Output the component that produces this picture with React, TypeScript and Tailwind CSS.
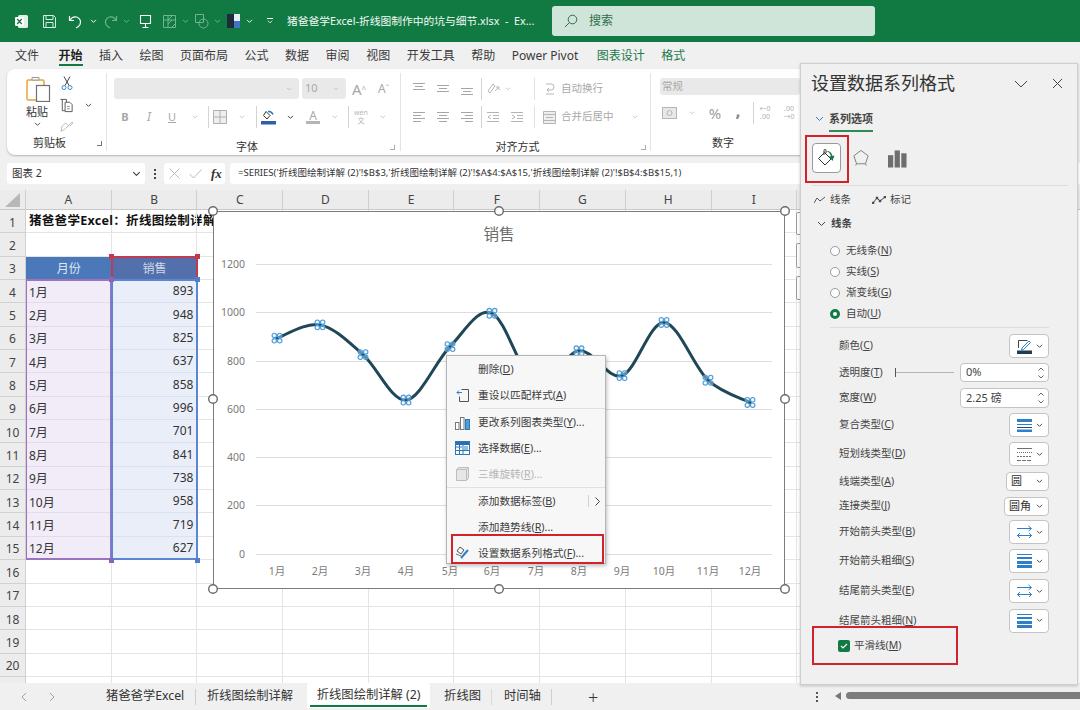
import React from "react";

const months = ["1月","2月","3月","4月","5月","6月","7月","8月","9月","10月","11月","12月"];
const sales = [893,948,825,637,858,996,701,841,738,958,719,627];
const xs = [277,320,363,406,450,492,536,579,622,664,708,750];
const ys = sales.map((v) => 554 - v * 0.2417);
const pts = xs.map((x, i) => [x, ys[i]] as [number, number]);

function smoothPath() {
  let d = `M${pts[0][0]} ${pts[0][1]}`;
  for (let i = 0; i < pts.length - 1; i++) {
    const p0 = pts[Math.max(i - 1, 0)], p1 = pts[i], p2 = pts[i + 1], p3 = pts[Math.min(i + 2, pts.length - 1)];
    const c1x = p1[0] + (p2[0] - p0[0]) / 6, c1y = p1[1] + (p2[1] - p0[1]) / 6;
    const c2x = p2[0] - (p3[0] - p1[0]) / 6, c2y = p2[1] - (p3[1] - p1[1]) / 6;
    d += ` C${c1x} ${c1y} ${c2x} ${c2y} ${p2[0]} ${p2[1]}`;
  }
  return d;
}

function Acc({ t }: { t: string }) {
  const m = t.match(/^(.*\()(.)(\).*)$/);
  if (!m) return <>{t}</>;
  return <>{m[1]}<span className="underline">{m[2]}</span>{m[3]}</>;
}

function Chev({ c = "#555", w = 8 }: { c?: string; w?: number }) {
  return (
    <svg width={w} height={w * 0.6} viewBox="0 0 8 5" fill="none" stroke={c} strokeWidth="1.1">
      <path d="M1 1l3 3 3-3" />
    </svg>
  );
}

function Cell({ w, children }: { w: string; children?: React.ReactNode }) {
  return <div className={`flex items-center justify-center shrink-0 ${w}`}>{children}</div>;
}

function Sep() {
  return <div className="w-px h-[22px] bg-[#d4d4d4] shrink-0" />;
}

function AlignV({ y }: { y: number }) {
  return (
    <svg width="14" height="14" viewBox="0 0 14 14" stroke="#a6a6a6" strokeWidth="1">
      <path d={`M1 ${y + .5}h12M3 ${y + 3.5}h8M1 ${y + 6.5}h12`} />
    </svg>
  );
}
function AlignH({ k }: { k: "l" | "c" | "r" }) {
  const d = k === "l" ? "M1 2.5h12M1 5.5h8M1 8.5h12M1 11.5h8" : k === "c" ? "M1 2.5h12M3 5.5h8M1 8.5h12M3 11.5h8" : "M1 2.5h12M5 5.5h8M1 8.5h12M5 11.5h8";
  return <svg width="14" height="14" viewBox="0 0 14 14" stroke="#a6a6a6" strokeWidth="1"><path d={d} /></svg>;
}

function TitleBar() {
  return (
    <div className="h-[42px] bg-[#117a43] flex items-center text-white shrink-0">
      <div className="flex items-center pl-[14px] w-[287px] shrink-0">
        <svg className="shrink-0" width="15" height="15" viewBox="0 0 15 15"><rect x="4" y="1" width="10" height="13" rx="1.5" fill="#dff0e6" /><rect x="1" y="3" width="9" height="9" rx="1" fill="#fff" /><path d="M3.2 5l4.5 5M7.7 5l-4.5 5" stroke="#117a43" strokeWidth="1.3" /></svg>
        <svg className="ml-[13px] shrink-0" width="15" height="15" viewBox="0 0 15 15" fill="none" stroke="#d5efe0" strokeWidth="1"><path d="M1.5 1.5h10l2 2v10h-12z" /><path d="M4 1.5v4h7v-4M4 13.5v-5h7v5" /></svg>
        <svg className="ml-[11px] shrink-0" width="15" height="15" viewBox="0 0 15 15" fill="none" stroke="#fff" strokeWidth="1.2"><path d="M1.5 2v4.5H6M2 6.5C3.5 3.5 6 2.5 8.5 3c3.5.8 5 4.5 3.5 7.5-1 1.8-2.5 3-4 3.5" /></svg>
        <div className="ml-[7px]"><Chev c="#fff" w={7} /></div>
        <svg className="ml-[6px] shrink-0" width="15" height="15" viewBox="0 0 15 15" fill="none" stroke="#6fb591" strokeWidth="1.2"><path d="M13.5 2v4.5H9M13 6.5C11.5 3.5 9 2.5 6.5 3c-3.5.8-5 4.5-3.5 7.5 1 1.8 2.5 3 4 3.5" /></svg>
        <div className="ml-[5px]"><Chev c="#6fb591" w={7} /></div>
        <svg className="ml-[8px] shrink-0" width="15" height="15" viewBox="0 0 15 15" fill="none" stroke="#fff" strokeWidth="1.1"><path d="M2.5 1.5h10v8h-10zM7.5 9.5v4M4.5 13.5h6" /></svg>
        <svg className="ml-[9px] shrink-0" width="15" height="15" viewBox="0 0 15 15" fill="none" stroke="#6fb591" strokeWidth="1"><path d="M1.5 1.5h12v12h-12zM1.5 6h12M6 1.5v12M9.5 13.5l4-4M6 10l4-4M6 6l4-4" /></svg>
        <div className="ml-[5px]"><Chev c="#6fb591" w={7} /></div>
        <svg className="ml-[5px] shrink-0" width="16" height="16" viewBox="0 0 16 16" fill="none" stroke="#6fb591" strokeWidth="1"><path d="M1.5 1.5h8v8h-8z" /><circle cx="9.5" cy="10.5" r="4.5" /></svg>
        <div className="ml-[4px]"><Chev c="#6fb591" w={7} /></div>
        <div className="ml-[6px] w-[13px] h-[14px] grid grid-cols-2 grid-rows-2 shrink-0">
          <div className="bg-[#1d2b3d]" /><div className="bg-[#e8eef6]" /><div className="bg-[#1d2b3d]" /><div className="bg-[#4472c4]" />
        </div>
        <div className="ml-[6px]"><Chev c="#fff" w={7} /></div>
        <div className="ml-[14px] flex flex-col items-center gap-[1px]"><div className="w-[6px] h-px bg-white" /><Chev c="#fff" w={6} /></div>
      </div>
      <div className="w-[265px] shrink-0 text-[10.75px] whitespace-nowrap text-[#f3faf6]">猪爸爸学Excel-折线图制作中的坑与细节.xlsx&nbsp; -&nbsp; Ex...</div>
      <div className="w-[323px] h-[30px] bg-[#cfe5d9] rounded-[3px] flex items-center pl-[12px] shrink-0">
        <svg width="14" height="14" viewBox="0 0 14 14" fill="none" stroke="#2f6e4c" strokeWidth="1"><circle cx="8.5" cy="5.5" r="4.3" /><path d="M5.3 8.7L1 13" /></svg>
        <span className="ml-[11px] text-[12px] text-[#2f6e4c]">搜索</span>
      </div>
    </div>
  );
}

function MenuBar() {
  const items = ["文件","开始","插入","绘图","页面布局","公式","数据","审阅","视图","开发工具","帮助","Power Pivot"];
  return (
    <div className="h-[27px] bg-[#f0f0f0] flex items-start pl-[15px] gap-[16.5px] text-[12px] text-[#3a3a3a] shrink-0 pt-[5px]">
      {items.map((t) => (
        t === "开始" ? (
          <div key={t} className="relative font-bold text-[#222] ml-[3px]">{t}<div className="absolute left-0 right-0 top-[17px] h-[2px] bg-[#117a43]" /></div>
        ) : <div key={t}>{t}</div>
      ))}
      <div className="text-[#1c7a4a] ml-[2px]">图表设计</div>
      <div className="text-[#1c7a4a]">格式</div>
    </div>
  );
}

function Ribbon() {
  const dim = "text-[#a8a8a8]";
  return (
    <div className="h-[94px] bg-[#f0f0f0] pl-[7px] shrink-0">
      <div className="h-[86px] w-[1060px] bg-white rounded-[8px] shadow-[0_1px_2px_rgba(0,0,0,0.25)] flex text-[11px] text-[#333] overflow-hidden">
        {/* clipboard */}
        <div className="w-[100px] border-r border-[#e3e3e3] flex flex-col my-[4px] shrink-0">
          <div className="flex h-[66px]">
            <div className="w-[52px] pl-[19px] flex flex-col items-start shrink-0">
              <svg className="mt-[3px] shrink-0" width="25" height="26" viewBox="0 0 25 26" fill="none"><rect x="1" y="4" width="17" height="20" rx="1.5" stroke="#e8a33d" strokeWidth="1.5" fill="#fff" /><path d="M6 4h7V1.5H6z" stroke="#999" fill="#fff" /><rect x="10.500" y="9.500" width="13" height="16" fill="#fff" stroke="#707070" strokeWidth="1.2" /></svg>
              <div className="text-[11px] mt-[3px] leading-[14px]">粘贴</div>
              <div className="ml-[8px] mt-[3px]"><Chev c="#444" w={7} /></div>
            </div>
            <div className="flex flex-col items-start pt-[3px]">
              <svg className="ml-[2px]" width="12" height="14" viewBox="0 0 12 14" fill="none"><path d="M3 .5l5 9M9 .5l-5 9" stroke="#444" strokeWidth="1" /><circle cx="3" cy="11.500" r="2" stroke="#3b89c9" /><circle cx="9" cy="11.500" r="2" stroke="#3b89c9" /></svg>
              <div className="flex items-center gap-[11px] mt-[8px]">
                <svg width="15" height="15" viewBox="0 0 16 16" fill="none" stroke="#555"><path d="M3 1.500h5v3M1.500 1.500h2v12h3" /><path d="M6.500 4.500h5l2.500 2.500v7.500h-7.500z" /><path d="M8.500 9h3M8.500 11.500h3" stroke="#888" /></svg>
                <Chev c="#444" w={7} />
              </div>
              <svg className="mt-[8px] ml-[1px]" width="14" height="13" viewBox="0 0 15 14" fill="none" stroke="#b5b5b5"><path d="M1 11l4-2 4-4-3-3-4 4zM9 5l4-4 1 1-4 4" /></svg>
            </div>
          </div>
          <div className="relative text-center pr-[14px] leading-[16px]">剪贴板<span className="absolute right-[4px] top-[6px] w-[5px] h-[5px] border-b border-r border-[#777]" /></div>
        </div>
        {/* font */}
        <div className="w-[294px] border-r border-[#e3e3e3] flex flex-col my-[4px] pl-[7px] shrink-0">
          <div className="flex items-center mt-[5px] h-[21px]">
            <div className="w-[185px] h-[21px] bg-[#e9e9e9] rounded-[3px] flex items-center justify-end pr-[7px] shrink-0"><Chev c="#bbb" w={6} /></div>
            <div className={`ml-[3px] w-[44px] h-[21px] bg-[#e9e9e9] rounded-[3px] flex items-center justify-between pl-[3px] pr-[7px] text-[11px] shrink-0 ${dim}`}>10<Chev c="#bbb" w={6} /></div>
            <div className={`ml-[6px] text-[15px] leading-[18px] ${dim} w-[26px] shrink-0`}>A<span className="text-[8px] align-top">^</span></div>
            <div className={`text-[12px] leading-[18px] ${dim}`}>A<span className="text-[8px] align-top">ˇ</span></div>
          </div>
          <div className="flex items-center mt-[8px] h-[20px]">
            <Cell w="w-[22px]"><span className={`font-bold text-[11px] ${dim}`}>B</span></Cell>
            <Cell w="w-[26px]"><span className={`italic text-[12px] ${dim}`}>I</span></Cell>
            <Cell w="w-[20px]"><span className={`underline text-[11px] ${dim}`}>U</span></Cell>
            <Cell w="w-[26px]"><Chev c="#bbb" w={6} /></Cell>
            <Cell w="w-[1px]"><Sep /></Cell>
            <Cell w="w-[22px]"><svg width="14" height="14" viewBox="0 0 14 14" fill="#efefef" stroke="#b0b0b0"><path d="M.5.5h13v13H.5zM7 .5v13M.5 7h13" /></svg></Cell>
            <Cell w="w-[22px]"><Chev c="#bbb" w={6} /></Cell>
            <Cell w="w-[6px]"><Sep /></Cell>
            <Cell w="w-[18px]"><svg width="15" height="15" viewBox="0 0 15 15"><path d="M5 1.500l4 4-3 3.500-3.500-3.500z" fill="#fff" stroke="#333" /><path d="M7 1.500c2.500-.5 4 .5 5 3" stroke="#2f75b5" strokeWidth="1.500" fill="none" /><rect x="0" y="11" width="15" height="3.500" fill="#2f5fa8" /></svg></Cell>
            <Cell w="w-[26px]"><Chev c="#333" w={7} /></Cell>
            <Cell w="w-[20px]"><div className="flex flex-col items-center"><span className={`text-[12px] leading-[11px] ${dim}`}>A</span><div className="w-[14px] h-[3px] bg-[#b5b5b5]" /></div></Cell>
            <Cell w="w-[24px]"><Chev c="#bbb" w={6} /></Cell>
            <Cell w="w-[2px]"><Sep /></Cell>
            <Cell w="w-[24px]"><div className="flex flex-col items-center text-[7px] leading-[8px] text-[#b8b8b8]"><span>wén</span><span>文</span></div></Cell>
            <Cell w="w-[20px]"><Chev c="#bbb" w={6} /></Cell>
          </div>
          <div className="relative text-center mt-[12px] pr-[20px] leading-[16px]">字体<span className="absolute right-[5px] top-[6px] w-[5px] h-[5px] border-b border-r border-[#aaa]" /></div>
        </div>
        {/* alignment */}
        <div className="w-[250px] border-r border-[#e3e3e3] flex flex-col my-[4px] shrink-0 pl-[6px]">
          <div className="flex items-center mt-[5px] h-[21px]">
            <Cell w="w-[24px]"><AlignV y={1} /></Cell>
            <Cell w="w-[24px]"><AlignV y={3} /></Cell>
            <Cell w="w-[24px]"><AlignV y={6} /></Cell>
            <Cell w="w-[4px]"><Sep /></Cell>
            <Cell w="w-[20px]"><svg width="15" height="14" viewBox="0 0 15 14" fill="none" stroke="#b5b5b5"><path d="M2 9l5-7 2 2-5 7zM9 9l4-4M13 5h-3M13 5v3" /></svg></Cell>
            <Cell w="w-[10px]"><Chev c="#bbb" w={6} /></Cell>
            <div className="w-[22px] flex justify-end shrink-0"><div className="w-px h-[22px] bg-[#e3e3e3]" /></div>
            <div className={`ml-[9px] flex items-center gap-[5px] ${dim} text-[10.5px] whitespace-nowrap`}>
              <svg width="12" height="14" viewBox="0 0 12 14" fill="none" stroke="#b5b5b5"><path d="M2 2h5a3 3 0 010 6H3M5 6L3 8l2 2M2 12h8" /></svg>
              自动换行
            </div>
          </div>
          <div className="flex items-center mt-[8px] h-[20px]">
            <Cell w="w-[24px]"><AlignH k="l" /></Cell>
            <Cell w="w-[24px]"><AlignH k="c" /></Cell>
            <Cell w="w-[24px]"><AlignH k="r" /></Cell>
            <Cell w="w-[4px]"><Sep /></Cell>
            <Cell w="w-[20px]"><svg width="14" height="14" viewBox="0 0 14 14" fill="none" stroke="#b5b5b5"><path d="M1 2.500h12M7 5.500h6M7 8.500h6M1 11.500h12M5 5l-3 2 3 2" /></svg></Cell>
            <Cell w="w-[28px]"><svg width="14" height="14" viewBox="0 0 14 14" fill="none" stroke="#b5b5b5"><path d="M1 2.500h12M7 5.500h6M7 8.500h6M1 11.500h12M2 5l3 2-3 2" /></svg></Cell>
            <div className="w-[4px] flex justify-end shrink-0"><div className="w-px h-[22px] bg-[#e3e3e3]" /></div>
            <div className={`ml-[8px] flex items-center gap-[5px] ${dim} text-[10.5px] whitespace-nowrap`}>
              <svg width="13" height="13" viewBox="0 0 13 13" fill="#eee" stroke="#b5b5b5"><path d="M.5.500h12v12H.5zM.5 3.500h12M.5 9.500h12M3 6.500h7" /></svg>
              合并后居中
            </div>
            <div className="ml-[18px]"><Chev c="#bbb" w={6} /></div>
          </div>
          <div className="relative text-center mt-[12px] pr-[22px] leading-[16px]">对齐方式<span className="absolute right-[4px] top-[6px] w-[5px] h-[5px] border-b border-r border-[#aaa]" /></div>
        </div>
        {/* number */}
        <div className="w-[150px] flex flex-col my-[4px] pl-[9px] shrink-0">
          <div className={`mt-[5px] w-[140px] h-[21px] bg-[#e9e9e9] rounded-[3px] flex items-center pl-[2px] text-[10.5px] ${dim}`}>常规</div>
          <div className="flex items-center mt-[8px] h-[20px]">
            <Cell w="w-[18px]"><svg width="15" height="12" viewBox="0 0 15 12" fill="#e8e8e8" stroke="#b5b5b5"><rect x=".5" y=".5" width="14" height="11" /><circle cx="7.500" cy="6" r="2.500" /></svg></Cell>
            <Cell w="w-[28px]"><Chev c="#bbb" w={6} /></Cell>
            <Cell w="w-[18px]"><span className="text-[15px] text-[#a0a0a0]">%</span></Cell>
            <Cell w="w-[28px]"><span className="text-[#888] font-bold text-[18px] leading-[10px] pb-[6px]">,</span></Cell>
            <Cell w="w-[2px]"><Sep /></Cell>
            <Cell w="w-[22px]"><span className="text-[7px] leading-[8px] text-[#b0b0b0] text-center">←0<br />.00</span></Cell>
            <Cell w="w-[26px]"><span className="text-[7px] leading-[8px] text-[#b0b0b0] text-center">.00<br />→0</span></Cell>
          </div>
          <div className="mt-[12px] ml-[52px] leading-[16px]">数字</div>
        </div>
      </div>
    </div>
  );
}

function FormulaBar() {
  return (
    <div className="h-[27px] bg-[#f0f0f0] flex pl-[7px] shrink-0 text-[10.5px] text-[#333]">
      <div className="w-[138px] h-[21px] bg-white rounded-[3px] flex items-center justify-between pl-[5px] pr-[4px]">
        <span className="text-[10.5px]">图表 2</span><Chev c="#444" w={9} />
      </div>
      <div className="w-[19px] flex flex-col items-center justify-center h-[21px] gap-[2px]">
        <div className="w-[2px] h-[2px] bg-[#444]" /><div className="w-[2px] h-[2px] bg-[#444]" /><div className="w-[2px] h-[2px] bg-[#444]" />
      </div>
      <div className="w-[61px] h-[21px] bg-white rounded-[3px] flex items-center pl-[5px] gap-[9px]">
        <svg width="11" height="11" viewBox="0 0 11 11" stroke="#bbb" fill="none"><path d="M.5.5l10 10M10.500.5l-10 10" /></svg>
        <svg width="13" height="10" viewBox="0 0 13 10" stroke="#bbb" fill="none"><path d="M.5 5l4 4 8-8.500" /></svg>
        <span className="font-['Liberation_Serif',serif] italic font-bold text-[13px] text-[#333]">fx</span>
      </div>
      <div className="ml-[5px] flex-1 h-[21px] bg-white rounded-l-[3px] flex items-center pl-[8px] whitespace-nowrap text-[9.5px] text-[#333]">
        =SERIES('折线图绘制详解 (2)'!$B$3,'折线图绘制详解 (2)'!$A$4:$A$15,'折线图绘制详解 (2)'!$B$4:$B$15,1)
      </div>
    </div>
  );
}

function Grid() {
  const cols = ["A","B","C","D","E","F","G","H","I","J","K"];
  const rows = Array.from({ length: 21 }, (_, i) => i + 1);
  return (
    <div className="relative flex-1 overflow-hidden bg-white">
      <div className="flex h-[20px] bg-[#ececec] text-[12px] text-[#444] border-b border-[#c8c8c8]">
        <div className="w-[26px] shrink-0 flex items-center justify-center border-r border-[#cfcfcf]">
          <svg width="16" height="14" viewBox="0 0 16 14"><path d="M15 0v14H0z" fill="#b8b8b8" /></svg>
        </div>
        {cols.map((c) => <div key={c} className="w-[85.7px] shrink-0 flex items-center justify-center border-r border-[#cfcfcf]">{c}</div>)}
      </div>
      {rows.map((r) => {
        const data = r >= 4 && r <= 15;
        return (
          <div key={r} className="flex h-[23.35px] text-[12px] text-[#444]">
            <div className="w-[26px] shrink-0 bg-[#ececec] flex items-center justify-center border-r border-b border-[#d0d0d0] pt-[3px]">{r < 21 ? r : null}</div>
            {cols.map((c) => {
              if (r === 1 && c === "A")
                return <div key={c} className="w-[85.7px] shrink-0 border-r border-b border-[#e4e4e4] pl-[3px] flex items-center whitespace-nowrap font-bold text-[#111] text-[12.5px] tracking-[0.3px] pt-[1px]">猪爸爸学Excel：折线图绘制详解</div>;
              if (r === 3 && c === "A")
                return <div key={c} className="w-[85.7px] shrink-0 bg-[#4a78b8] text-[#dfe7f3] flex items-center justify-center pt-[1px]">月份</div>;
              if (r === 3 && c === "B")
                return <div key={c} className="w-[85.7px] shrink-0 bg-[#5370ac] text-[#d0d7e6] flex items-center justify-center pt-[1px]">销售</div>;
              if (data && c === "A")
                return <div key={c} className="w-[85.7px] shrink-0 bg-[#f1ecf7] border-b border-[#e2dcec] pl-[3px] flex items-center text-[#333] pt-[3px]">{months[r - 4]}</div>;
              if (data && c === "B")
                return <div key={c} className="w-[85.7px] shrink-0 bg-[#e9eef9] border-b border-[#dbe1ee] pr-[4px] flex items-center justify-end text-[#333]">{sales[r - 4]}</div>;
              return <div key={c} className="w-[85.7px] shrink-0 border-r border-b border-[#e4e4e4]" />;
            })}
          </div>
        );
      })}

      {/* range highlight frames */}
      <div className="absolute left-[111px] top-[66px] w-[87px] h-[24px] border-t-2 border-x-2 border-[#c23a4e]" />
      <div className="absolute left-[26px] top-[89px] w-[86px] h-[281px] border-l border-r-2 border-y-2 border-[#9a74c2]" />
      <div className="absolute left-[111px] top-[89px] w-[87px] h-[281px] border-2 border-[#5a86d4]" />
      <div className="absolute left-[109px] top-[64px] w-[5px] h-[5px] bg-[#c23a4e]" />
      <div className="absolute left-[195px] top-[64px] w-[5px] h-[5px] bg-[#c23a4e]" />
      <div className="absolute left-[109px] top-[87px] w-[5px] h-[5px] bg-[#8d63b8]" />
      <div className="absolute left-[195px] top-[87px] w-[5px] h-[5px] bg-[#4f7dcf]" />
      <div className="absolute left-[109px] top-[368px] w-[5px] h-[5px] bg-[#8d63b8]" />
      <div className="absolute left-[195px] top-[368px] w-[5px] h-[5px] bg-[#4f7dcf]" />

      <Chart />

      {/* chart side buttons */}
      <div className="absolute left-[796px] top-[22px] w-[12px] h-[23px] bg-white border border-[#9a9a9a] rounded-[2px]" />
      <div className="absolute left-[796px] top-[53px] w-[12px] h-[25px] bg-white border border-[#9a9a9a] rounded-[2px]" />
      <div className="absolute left-[796px] top-[86px] w-[12px] h-[24px] bg-white border border-[#9a9a9a] rounded-[2px]" />
      <ContextMenu />
    </div>
  );
}

function Chart() {
  const grid = [[1200, 264], [1000, 312], [800, 361], [600, 409], [400, 457], [200, 505], [0, 554]];
  const handles = [[213, 211], [499, 211], [785, 211], [213, 399], [785, 399], [213, 589], [499, 589], [785, 589]];
  return (
    <div className="absolute left-[213px] top-[21px] w-[572px] h-[378px] bg-white border border-[#7c7c7c]">
      <svg className="absolute -left-px -top-px overflow-visible" width="572" height="378" viewBox="213 211 572 378" fontFamily="'Noto Sans','Noto Sans CJK SC',sans-serif">
        <text x="499" y="240" textAnchor="middle" fontSize="15.5" fill="#6b6b6b">销售</text>
        {grid.map(([v, y]) => (
          <g key={v}>
            <line x1="256" x2="772" y1={y + .5} y2={y + .5} stroke="#dedede" />
            <text x="245" y={y + 4} textAnchor="end" fontSize="10.5" fill="#7a7a7a">{v}</text>
          </g>
        ))}
        {months.map((m, i) => (
          <text key={m} x={xs[i]} y="575" textAnchor="middle" fontSize="10.500" fill="#7a7a7a">{m}</text>
        ))}
        <path d={smoothPath()} fill="none" stroke="#1f4758" strokeWidth="3" strokeLinecap="round" />
        {pts.map(([x, y], i) => (
          <g key={i} fill="#dcecf8" fillOpacity="0.4" stroke="#4c9bd8" strokeWidth="1.1">
            <circle cx={x - 2.7} cy={y - 2.7} r="2.2" />
            <circle cx={x + 2.7} cy={y - 2.7} r="2.2" />
            <circle cx={x - 2.7} cy={y + 2.7} r="2.2" />
            <circle cx={x + 2.7} cy={y + 2.7} r="2.2" />
          </g>
        ))}
        {handles.map(([x, y], i) => (
          <circle key={i} cx={x} cy={y} r="4.300" fill="#fff" stroke="#6b6b6b" strokeWidth="1.400" />
        ))}
      </svg>
    </div>
  );
}

function ContextMenu() {
  const row = "h-[26px] flex items-center shrink-0";
  const icon = "w-[31px] flex justify-center shrink-0";
  return (
    <div className="absolute left-[446px] top-[165px] w-[160px] h-[209px] bg-[#f7f7f7] border border-[#b5b5b5] shadow-[1px_2px_4px_rgba(0,0,0,0.25)] flex flex-col text-[10.7px] text-[#3c3c3c]">
      <div className={row}><div className={icon} /><span><Acc t="删除(D)" /></span></div>
      <div className={row}>
        <div className={icon}><svg width="14" height="15" viewBox="0 0 14 15" fill="none" stroke="#555"><path d="M5.500 1.500h7v12h-9v-5" /><path d="M1 4.500h5M3 2.500l-2 2 2 2" stroke="#2f80c8" /></svg></div>
        <span><Acc t="重设以匹配样式(A)" /></span>
      </div>
      <div className="h-px bg-[#e0e0e0] ml-[32px] shrink-0" />
      <div className={row}>
        <div className={icon}><svg width="15" height="15" viewBox="0 0 15 15"><rect x=".5" y="7.500" width="3.500" height="7" fill="#fff" stroke="#777" /><rect x="5.500" y="2.500" width="3.500" height="12" fill="#fff" stroke="#777" /><rect x="10.500" y="4.500" width="4" height="10" fill="#4a9fdc" stroke="#2b78b4" /></svg></div>
        <span><Acc t="更改系列图表类型(Y)..." /></span>
      </div>
      <div className={row}>
        <div className={icon}><svg width="15" height="14" viewBox="0 0 15 14"><rect x=".5" y=".5" width="14" height="13" fill="#fff" stroke="#2b78b4" /><rect x="1" y="1" width="13" height="3" fill="#2f6fb0" /><path d="M1 6h6M1 9.500h13M4.500 4v10M8 4v10" stroke="#2b78b4" /><rect x="9" y="5" width="4" height="4" fill="#8cc3ea" /></svg></div>
        <span><Acc t="选择数据(E)..." /></span>
      </div>
      <div className={`${row} text-[#b5b5b5]`}>
        <div className={icon}><svg width="13" height="14" viewBox="0 0 13 14" fill="#e6e6e6" stroke="#bdbdbd"><path d="M.5 2.500l2-2h10v11l-2 2H.5zM.5 2.500h10v11M10.500 2.500l2-2" /></svg></div>
        <span><Acc t="三维旋转(R)..." /></span>
      </div>
      <div className="h-px bg-[#e0e0e0] shrink-0" />
      <div className={row}>
        <div className={icon} /><span><Acc t="添加数据标签(B)" /></span>
        <div className="ml-auto flex items-center pr-[5px]">
          <div className="w-px h-[12px] bg-[#cfcfcf] mr-[6px]" />
          <svg width="5" height="9" viewBox="0 0 5 9" fill="none" stroke="#444"><path d="M.5.5l4 4-4 4" /></svg>
        </div>
      </div>
      <div className={row}><div className={icon} /><span><Acc t="添加趋势线(R)..." /></span></div>
      <div className={row}>
        <div className={icon}><svg width="15" height="14" viewBox="0 0 15 14" fill="none"><path d="M2 5l3-4 4 3-3 4z" stroke="#555" /><path d="M6 12l7-8" stroke="#2f80c8" strokeWidth="2" /><path d="M1 8l5 2" stroke="#777" /></svg></div>
        <span><Acc t="设置数据系列格式(F)..." /></span>
      </div>
      <div className="absolute left-[4px] top-[178px] w-[153px] h-[30px] border-[2px] border-[#d2232a]" />
    </div>
  );
}

function PaneBtn({ children, w = "w-[40px]", h = "h-[24px]" }: { children: React.ReactNode; w?: string; h?: string }) {
  return (
    <div className={`${w} ${h} bg-white border border-[#c4c4c4] rounded-[4px] flex items-center justify-between pl-[7px] pr-[5px] shrink-0`}>
      {children}
      <Chev c="#444" w={7} />
    </div>
  );
}

const Lines = () => (
  <svg width="15" height="14" viewBox="0 0 15 14"><rect y="0" width="15" height="1" fill="#2f80c8" /><rect y="3" width="15" height="2" fill="#2f80c8" /><rect y="7" width="15" height="3" fill="#2f80c8" /><rect y="11" width="15" height="3" fill="#2f80c8" /></svg>
);
const Compound = () => (
  <svg width="15" height="13" viewBox="0 0 15 13"><rect y="0" width="15" height="3" fill="#2f80c8" /><rect y="5" width="15" height="1" fill="#2f80c8" /><rect y="8" width="15" height="1" fill="#1f4a78" /><rect y="10.500" width="15" height="2.500" fill="#2f80c8" /></svg>
);
const Dash = () => (
  <svg width="15" height="13" viewBox="0 0 15 13" stroke="#707070"><path d="M0 .5h15" /><path d="M0 4.500h15" strokeDasharray="1 1" /><path d="M0 8.500h15" strokeDasharray="2 1" /><path d="M0 12.500h15" strokeDasharray="4 1" /></svg>
);
const Arrows = () => (
  <svg width="15" height="14" viewBox="0 0 15 14" fill="none" stroke="#2f80c8"><path d="M0 3.500h14M11.500 1l3 2.500-3 2.500M0 10.500h15M3 8L.500 10.500 3 13M12 8l2.500 2.500L12 13" /></svg>
);

function PaneRow({ h, label, children }: { h: string; label: string; children: React.ReactNode }) {
  return (
    <div className={`${h} flex items-center justify-between pl-[38px] pr-[28px] shrink-0`}>
      <span className="whitespace-nowrap"><Acc t={label} /></span>
      {children}
    </div>
  );
}

function Radio({ label, on }: { label: string; on?: boolean }) {
  return (
    <div className="h-[21px] flex items-center pl-[29px] shrink-0">
      <div className={`w-[10px] h-[10px] rounded-full bg-white ${on ? "border-[3px] border-[#117a43]" : "border border-[#9a9a9a]"}`} />
      <span className="ml-[6px]"><Acc t={label} /></span>
    </div>
  );
}

function Spin({ v, h }: { v: string; h: string }) {
  return (
    <div className={`w-[89px] ${h} bg-white border border-[#c4c4c4] rounded-[4px] flex items-center justify-between pl-[5px] pr-[4px] text-[11px]`}>
      <span>{v}</span>
      <div className="flex flex-col gap-[4px]">
        <svg width="6" height="4" viewBox="0 0 6 4" fill="none" stroke="#666"><path d="M.5 3.500L3 1l2.500 2.500" /></svg>
        <svg width="6" height="4" viewBox="0 0 6 4" fill="none" stroke="#666"><path d="M.5.500L3 3 5.500.500" /></svg>
      </div>
    </div>
  );
}

function Pane() {
  return (
    <div className="absolute left-[800px] top-[63px] w-[278px] h-[622px] bg-[#f0f0f0] border border-[#cfcfcf] shadow-[0_1px_3px_rgba(0,0,0,0.2)] flex flex-col text-[10.5px] text-[#444]">
      <div className="h-[39px] flex items-center pl-[10px] shrink-0">
        <span className="text-[18px] text-[#333]">设置数据系列格式</span>
        <svg className="ml-auto mr-[24px]" width="14" height="8" viewBox="0 0 14 8" fill="none" stroke="#444"><path d="M1 1l6 6 6-6" /></svg>
        <svg className="mr-[14px]" width="11" height="11" viewBox="0 0 11 11" fill="none" stroke="#444"><path d="M1 1l9 9M10 1l-9 9" /></svg>
      </div>
      <div className="h-[32px] flex items-center pl-[14px] shrink-0">
        <svg width="9" height="6" viewBox="0 0 9 6" fill="none" stroke="#2f80c8"><path d="M1 1l3.500 3.500L8 1" /></svg>
        <div className="relative ml-[5px] font-bold text-[#444] text-[11px]">系列选项<div className="absolute left-0 right-0 top-[19px] h-[2px] bg-[#2e8b57]" /></div>
      </div>
      {/* icon row */}
      <div className="relative flex items-center h-[50px] pl-[11px] shrink-0 pb-[4px]">
        <div className="w-[29px] h-[30px] bg-white border border-[#9a9a9a] rounded-[4px] flex items-center justify-center shrink-0">
          <svg width="21" height="21" viewBox="0 0 21 21" fill="none"><path d="M8.500 4.500l6.500 6.500-6 6-6.500-6.500z" stroke="#333" /><path d="M8 7V2.500a1 1 0 012 0V5" stroke="#333" /><path d="M10 3c3-.5 6 1.500 6.500 5l2-.5-2 5.500-3.500-4.500 2-.3c-.5-2.500-2.500-4.700-5-5.200" fill="#117a43" /></svg>
        </div>
        <svg className="ml-[12px] shrink-0" width="16" height="18" viewBox="0 0 18 19" fill="none" stroke="#777"><path d="M9 1l8 6-3 9H4L1 7z" /><path d="M4 16l-1 2M14 16l1 2" /></svg>
        <svg className="ml-[19px] shrink-0" width="19" height="19" viewBox="0 0 20 19" fill="#6e6e6e"><rect x="0" y="6" width="5.500" height="13" /><rect x="7" y="1" width="5.500" height="18" /><rect x="14" y="4" width="5.500" height="15" /></svg>
        <div className="absolute left-[4px] top-0 w-[44px] h-[48px] border-[2px] border-[#d2232a]" />
      </div>
      <div className="h-px bg-[#dcdcdc] ml-[11px] mr-[9px] shrink-0" />
      <div className="h-[26px] flex items-center pl-[13px] text-[10.5px] mt-[1px] shrink-0">
        <svg width="12" height="8" viewBox="0 0 12 8" fill="none" stroke="#555"><path d="M0 7l3-5 3 3 5-4" /></svg>
        <span className="ml-[4px]">线条</span>
        <svg className="ml-[21px]" width="14" height="8" viewBox="0 0 14 8" fill="none" stroke="#444"><path d="M1 7l4-5 3 3 5-4" /><g fill="#444"><circle cx="1" cy="7" r="1" /><circle cx="5" cy="2" r="1" /><circle cx="8" cy="5" r="1" /><circle cx="13" cy="1" r="1" /></g></svg>
        <span className="ml-[4px]">标记</span>
      </div>
      <div className="h-[22px] flex items-center pl-[16px] shrink-0">
        <svg width="9" height="6" viewBox="0 0 9 6" fill="none" stroke="#444"><path d="M1 1l3.500 3.500L8 1" /></svg>
        <span className="ml-[5px] font-semibold">线条</span>
      </div>
      <div className="h-[5px] shrink-0" />
      <Radio label="无线条(N)" />
      <Radio label="实线(S)" />
      <Radio label="渐变线(G)" />
      <Radio label="自动(U)" on />
      <div className="h-px bg-[#dcdcdc] ml-[29px] mr-[28px] mt-[3px] mb-[5px] shrink-0" />
      <PaneRow h="h-[26px]" label="颜色(C)">
        <PaneBtn><svg width="15" height="15" viewBox="0 0 15 15" fill="none"><path d="M1.500 9V1.500h9" stroke="#444" /><path d="M5 9l7-7 1.500 1.500-7 7L4.500 11z" stroke="#2f80c8" /><rect x="0" y="11.500" width="15" height="3.500" fill="#1f3c50" /></svg></PaneBtn>
      </PaneRow>
      <div className="h-[25px] mt-[1px] flex items-center pl-[38px] pr-[28px] shrink-0 justify-between">
        <span className="whitespace-nowrap"><Acc t="透明度(T)" /></span>
        <div className="flex items-center ml-[6px] w-[59px]"><div className="w-px h-[9px] bg-[#555]" /><div className="flex-1 h-px bg-[#b5b5b5]" /></div>
        <Spin v="0%" h="h-[19px]" />
      </div>
      <PaneRow h="h-[26px]" label="宽度(W)"><Spin v="2.25 磅" h="h-[20px]" /></PaneRow>
      <PaneRow h="h-[28px]" label="复合类型(C)"><PaneBtn><Compound /></PaneBtn></PaneRow>
      <PaneRow h="h-[30px]" label="短划线类型(D)"><PaneBtn><Dash /></PaneBtn></PaneRow>
      <PaneRow h="h-[25px]" label="线端类型(A)">
        <PaneBtn w="w-[43px]" h="h-[19px]"><span className="-ml-[3px] text-[#333] text-[11px]">圆</span></PaneBtn>
      </PaneRow>
      <PaneRow h="h-[24px]" label="连接类型(J)">
        <PaneBtn w="w-[45px]" h="h-[19px]"><span className="-ml-[3px] text-[#333] text-[11px]">圆角</span></PaneBtn>
      </PaneRow>
      <PaneRow h="h-[28px]" label="开始箭头类型(B)"><PaneBtn><Arrows /></PaneBtn></PaneRow>
      <PaneRow h="h-[30px]" label="开始箭头粗细(S)"><PaneBtn><Lines /></PaneBtn></PaneRow>
      <PaneRow h="h-[30px]" label="结尾箭头类型(E)"><PaneBtn><Arrows /></PaneBtn></PaneRow>
      <PaneRow h="h-[29px]" label="结尾箭头粗细(N)"><PaneBtn><Lines /></PaneBtn></PaneRow>
      <div className="relative h-[26px] flex items-center pl-[37px] mt-[-2px] shrink-0">
        <div className="w-[12px] h-[12px] bg-[#117a43] rounded-[2px] flex items-center justify-center">
          <svg width="8" height="6" viewBox="0 0 8 6" fill="none" stroke="#fff" strokeWidth="1.200"><path d="M1 3l2 2 4-4" /></svg>
        </div>
        <span className="ml-[4px]"><Acc t="平滑线(M)" /></span>
      </div>
      <div className="absolute left-[11px] top-[562px] w-[146px] h-[39px] border-[2px] border-[#d2232a]" />
    </div>
  );
}

function SheetTabs() {
  return (
    <div className="h-[27px] bg-[#f0f0f0] flex items-center shrink-0 text-[12.3px] text-[#333] relative">
      <div className="flex items-center pl-[21px] gap-[22px] w-[106px] shrink-0">
        <svg width="6" height="10" viewBox="0 0 6 10" fill="none" stroke="#a0a0a0"><path d="M5 1L1 5l4 4" /></svg>
        <svg width="6" height="10" viewBox="0 0 6 10" fill="none" stroke="#a0a0a0"><path d="M1 1l4 4-4 4" /></svg>
      </div>
      <span className="w-[80px] whitespace-nowrap">猪爸爸学Excel</span>
      <div className="w-px h-[16px] bg-[#cfcfcf] ml-[9px]" />
      <span className="ml-[11px]">折线图绘制详解</span>
      <div className="ml-[14px] w-[123px] h-[25px] bg-white rounded-t-[3px] self-start flex items-center justify-center relative">
        折线图绘制详解 (2)
        <div className="absolute left-[3px] right-[3px] bottom-[1px] h-[2px] bg-[#117a43]" />
      </div>
      <span className="ml-[14px]">折线图</span>
      <div className="w-px h-[16px] bg-[#d8d8d8] ml-[10px]" />
      <span className="ml-[12px]">时间轴</span>
      <div className="w-px h-[16px] bg-[#cfcfcf] ml-[10px]" />
      <span className="ml-[36px] text-[18px] leading-[18px] font-light">+</span>
      <div className="absolute left-[816px] top-[9px] flex flex-col gap-[2px]">
        <div className="w-[2px] h-[2px] bg-[#555]" /><div className="w-[2px] h-[2px] bg-[#555]" /><div className="w-[2px] h-[2px] bg-[#555]" />
      </div>
      <svg className="absolute left-[835px] top-[9px]" width="6" height="8" viewBox="0 0 6 8" fill="#777"><path d="M6 0v8L0 4z" /></svg>
      <div className="absolute left-[846px] top-[9px] w-[234px] h-[7px] rounded-l-full bg-[#7d7d7d]" />
    </div>
  );
}

export default function App() {
  return (
    <div className="relative w-[1080px] h-[710px] overflow-hidden flex flex-col bg-white font-['Noto_Sans','Noto_Sans_CJK_SC',sans-serif]">
      <TitleBar />
      <MenuBar />
      <Ribbon />
      <FormulaBar />
      <Grid />
      <SheetTabs />
      <Pane />
    </div>
  );
}
